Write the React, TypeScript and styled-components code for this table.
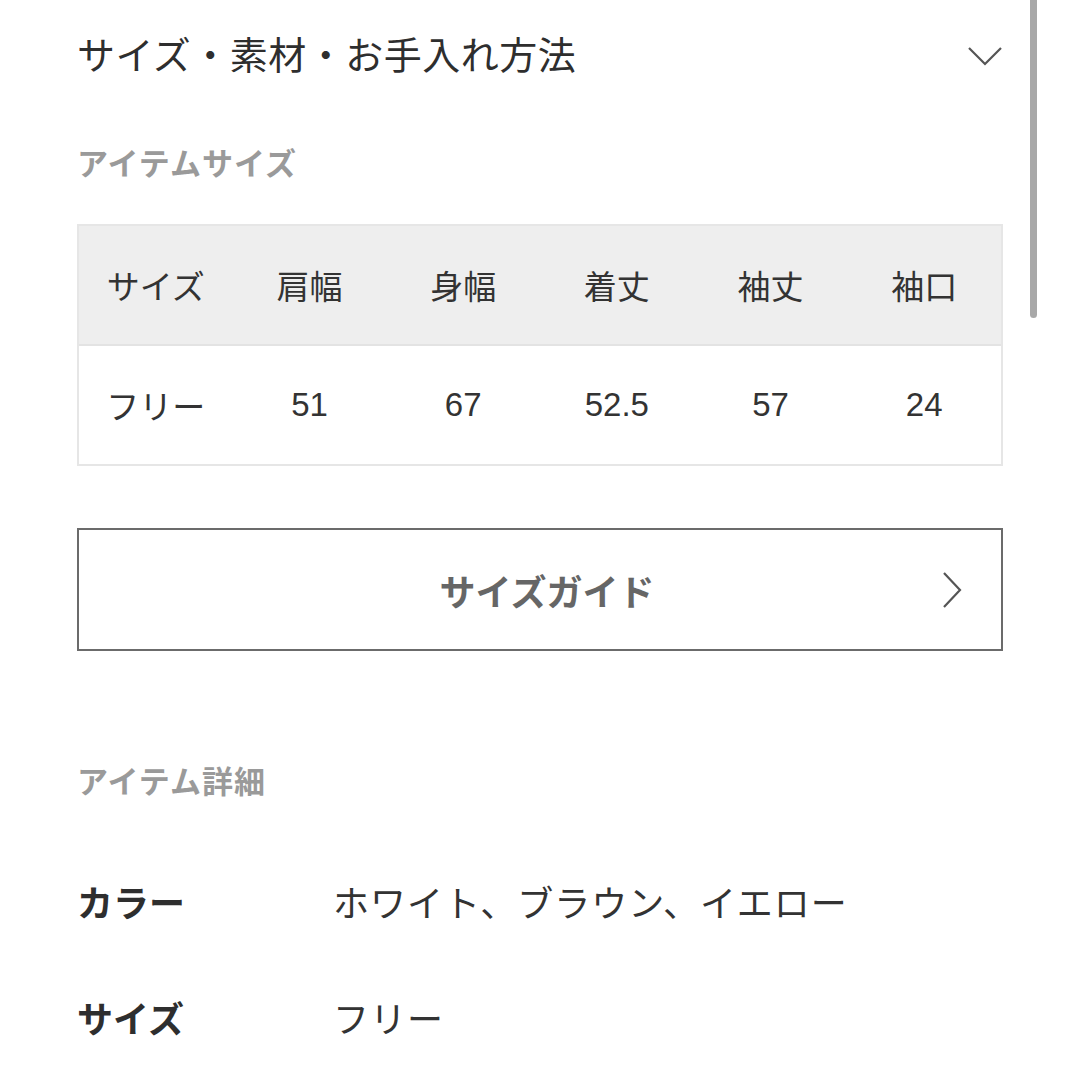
import React from "react";
import styled, { createGlobalStyle } from "styled-components";

const Global = createGlobalStyle`
  html, body { margin: 0; padding: 0; background: #fff; }
  body {
    font-family: "Liberation Sans", "Noto Sans CJK JP", sans-serif;
    color: #333;
  }
`;

const Page = styled.div`
  position: relative;
  width: 1080px;
  height: 1080px;
  overflow: hidden;
  padding: 0 77px;
  box-sizing: border-box;
  background: #fff;
`;

const ScrollThumb = styled.div`
  position: absolute;
  top: -10px;
  left: 1030px;
  width: 7px;
  height: 328px;
  border-radius: 4px;
  background: #a8a8a8;
`;

const Header = styled.div`
  display: flex;
  align-items: center;
  justify-content: space-between;
  height: 112px;
`;

const Title = styled.h2`
  margin: 0;
  padding-bottom: 8px;
  font-size: 38px;
  font-weight: 400;
  letter-spacing: 0.5px;
  color: #2e2e2e;
`;

const SectionLabel = styled.div<{ $top: number; $bottom: number }>`
  margin-top: ${(p) => p.$top}px;
  margin-bottom: ${(p) => p.$bottom}px;
  font-size: 31px;
  line-height: 40px;
  font-weight: 700;
  color: #9a9a9a;
  letter-spacing: 1px;
`;

const Table = styled.div`
  border: 2px solid #e6e6e6;
`;

const Row = styled.div<{ $head?: boolean }>`
  display: grid;
  grid-template-columns: repeat(6, 1fr);
  align-items: center;
  height: 118px;
  background: ${(p) => (p.$head ? "#eeeeee" : "#fff")};
  border-bottom: ${(p) => (p.$head ? "2px solid #e3e3e3" : "none")};
`;

const Cell = styled.div`
  text-align: center;
  font-size: 33px;
  color: #333;
`;

const GuideButton = styled.button`
  display: grid;
  grid-template-columns: 1fr auto 1fr;
  align-items: center;
  width: 100%;
  height: 123px;
  margin-top: 62px;
  padding: 0 38px 0 52px;
  border: 2px solid #6b6b6b;
  background: #fff;
  font-family: inherit;
  font-size: 36px;
  font-weight: 700;
  color: #666;
  cursor: pointer;
`;

const ButtonArrow = styled.span`
  justify-self: end;
  display: flex;
`;

const DetailList = styled.div`
  display: flex;
  flex-direction: column;
  gap: 68px;
  margin-top: 72px;
`;

const DetailRow = styled.div`
  display: grid;
  grid-template-columns: 256px 1fr;
  align-items: center;
  height: 48px;
  font-size: 36px;
`;

const DetailKey = styled.div`
  font-weight: 700;
  color: #2e2e2e;
`;

const DetailValue = styled.div`
  color: #333;
  letter-spacing: 1px;
`;

const headers = ["サイズ", "肩幅", "身幅", "着丈", "袖丈", "袖口"];
const values = ["フリー", "51", "67", "52.5", "57", "24"];

export default function App() {
  return (
    <Page>
      <Global />
      <ScrollThumb />
      <Header>
        <Title>サイズ・素材・お手入れ方法</Title>
        <svg width="36" height="22" viewBox="0 0 36 22" fill="none">
          <path d="M2 3 L18 19 L34 3" stroke="#555" strokeWidth="2.2" />
        </svg>
      </Header>
      <SectionLabel $top={33} $bottom={39}>アイテムサイズ</SectionLabel>
      <Table>
        <Row $head>
          {headers.map((h) => (
            <Cell key={h}>{h}</Cell>
          ))}
        </Row>
        <Row>
          {values.map((v, i) => (
            <Cell key={i}>{v}</Cell>
          ))}
        </Row>
      </Table>
      <GuideButton>
        <span />
        <span>サイズガイド</span>
        <ButtonArrow>
          <svg width="22" height="38" viewBox="0 0 22 38" fill="none">
            <path d="M3 2 L19 19 L3 36" stroke="#555" strokeWidth="2.2" />
          </svg>
        </ButtonArrow>
      </GuideButton>
      <SectionLabel $top={112} $bottom={0}>アイテム詳細</SectionLabel>
      <DetailList>
        <DetailRow>
          <DetailKey>カラー</DetailKey>
          <DetailValue>ホワイト、ブラウン、イエロー</DetailValue>
        </DetailRow>
        <DetailRow>
          <DetailKey>サイズ</DetailKey>
          <DetailValue>フリー</DetailValue>
        </DetailRow>
      </DetailList>
    </Page>
  );
}
